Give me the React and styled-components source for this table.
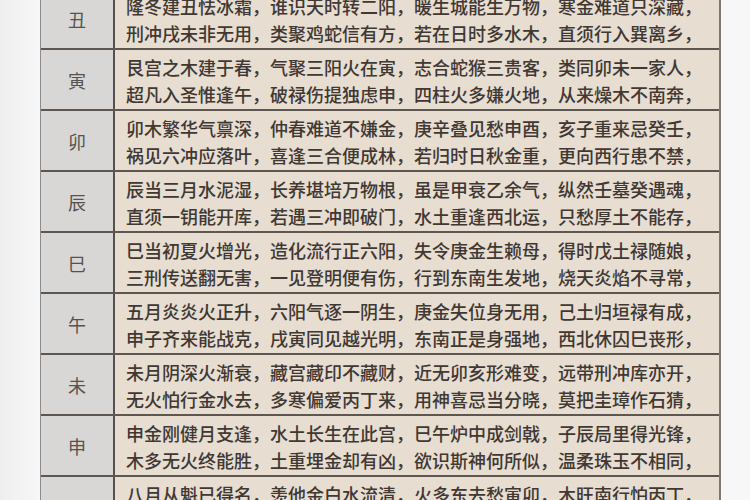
import React from "react";
import styled, { createGlobalStyle } from "styled-components";

const Global = createGlobalStyle`
  html, body { margin: 0; padding: 0; background: #f4f4f4; overflow: hidden; }
  body { font-family: "Noto Sans CJK SC", "Noto Sans", sans-serif; }
`;

const Page = styled.div`
  width: 750px;
  height: 500px;
  overflow: hidden;
  background: linear-gradient(90deg, #eeeeee 0px, #f7f7f7 40px, #f7f7f7 100%);
`;

const Table = styled.div`
  margin: -11px 0 0 40px;
  width: 678px;
  border-left: 1px solid #8c8c8c;
  border-right: 2px solid #7d7672;
  display: flex;
  flex-direction: column;
`;

const Row = styled.div`
  display: grid;
  grid-template-columns: 74px 1fr;
  height: 59px;
  border-bottom: 2px solid #5e5650;
  box-shadow: inset 0 -1px 0 #a89c90;
`;

const Label = styled.div`
  display: flex;
  align-items: center;
  justify-content: center;
  background: #d8d7d6;
  border-right: 2px solid #55504c;
  color: #55524f;
  font-size: 18px;
`;

const Content = styled.div`
  background: #e7ddd1;
  padding: 4px 0 0 11px;
  color: #3f3833;
  font-size: 18px;
  font-weight: 500;
  line-height: 27px;
  white-space: nowrap;
  overflow: hidden;
`;

const Line = styled.div``;

const rows = [
  ["丑", "隆冬建丑怯冰霜，谁识天时转二阳，暖生城能生万物，寒金难道只深藏，", "刑冲戌未非无用，类聚鸡蛇信有方，若在日时多水木，直须行入巽离乡，"],
  ["寅", "艮宫之木建于春，气聚三阳火在寅，志合蛇猴三贵客，类同卯未一家人，", "超凡入圣惟逢午，破禄伤提独虑申，四柱火多嫌火地，从来燥木不南奔，"],
  ["卯", "卯木繁华气禀深，仲春难道不嫌金，庚辛叠见愁申酉，亥子重来忌癸壬，", "祸见六冲应落叶，喜逢三合便成林，若归时日秋金重，更向西行患不禁，"],
  ["辰", "辰当三月水泥湿，长养堪培万物根，虽是甲衰乙余气，纵然壬墓癸遇魂，", "直须一钥能开库，若遇三冲即破门，水土重逢西北运，只愁厚土不能存，"],
  ["巳", "巳当初夏火增光，造化流行正六阳，失令庚金生赖母，得时戊土禄随娘，", "三刑传送翻无害，一见登明便有伤，行到东南生发地，烧天炎焰不寻常，"],
  ["午", "五月炎炎火正升，六阳气逐一阴生，庚金失位身无用，己土归垣禄有成，", "申子齐来能战克，戌寅同见越光明，东南正是身强地，西北休囚巳丧形，"],
  ["未", "未月阴深火渐衰，藏宫藏印不藏财，近无卯亥形难变，远带刑冲库亦开，", "无火怕行金水去，多寒偏爱丙丁来，用神喜忌当分晓，莫把圭璋作石猜，"],
  ["申", "申金刚健月支逢，水土长生在此宫，巳午炉中成剑戟，子辰局里得光锋，", "木多无火终能胜，土重埋金却有凶，欲识斯神何所似，温柔珠玉不相同，"],
  ["酉", "八月从魁已得名，羡他金白水流清，火多东去愁寅卯，木旺南行怕丙丁，", "柱中火旺偏嫌午，局里金多最爱壬，若遇刑冲全破局，逢生逢合福骈臻，"],
];

export default function App() {
  return (
    <Page>
      <Global />
      <Table>
        {rows.map(([label, a, b]) => (
          <Row key={label}>
            <Label>{label}</Label>
            <Content>
              <Line>{a}</Line>
              <Line>{b}</Line>
            </Content>
          </Row>
        ))}
      </Table>
    </Page>
  );
}
